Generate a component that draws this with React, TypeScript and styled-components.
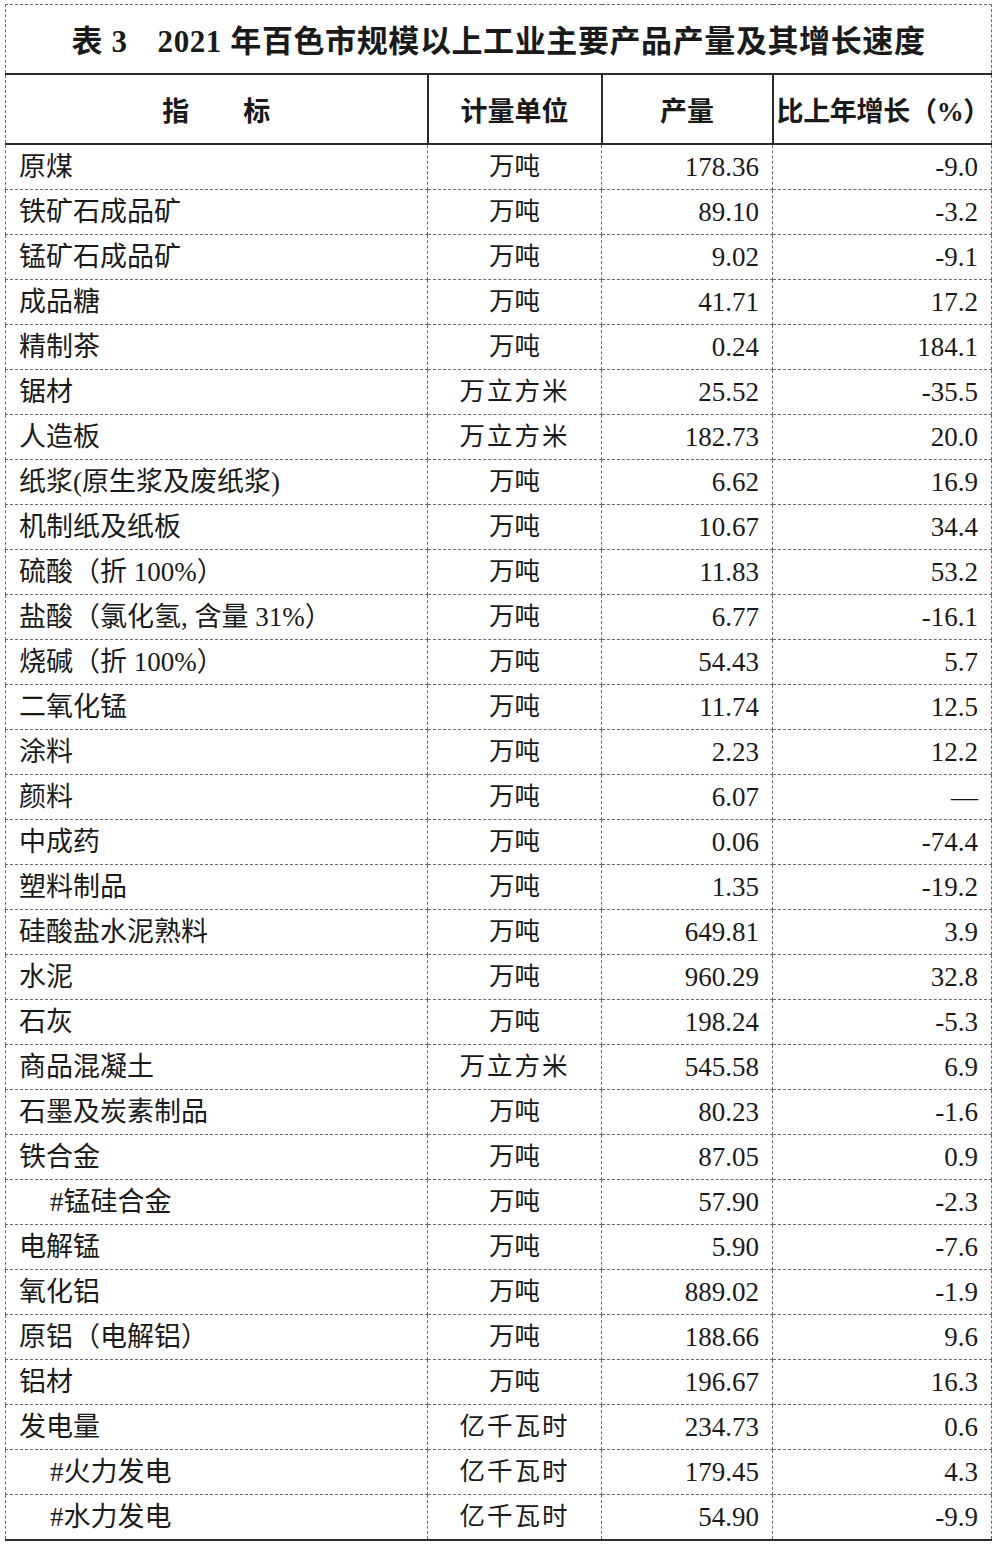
import React from 'react';
import styled, { createGlobalStyle } from 'styled-components';

const GlobalStyle = createGlobalStyle`
  html, body {
    margin: 0;
    padding: 0;
    background: #ffffff;
  }
  body {
    font-family: "Liberation Serif", "Noto Sans CJK SC", serif;
    color: #1a1a1a;
  }
`;

const Page = styled.div`
  width: 1000px;
  height: 1548px;
  padding: 4px 0 0 5px;
  box-sizing: border-box;
  background: #ffffff;
`;

const Table = styled.table`
  width: 986px;
  border-collapse: collapse;
  table-layout: fixed;
`;

const TitleCell = styled.th`
  height: 66px;
  padding: 0 0 2px;
  border-top: 1px dashed #6a6a6a;
  border-left: 1px dashed #6a6a6a;
  border-right: 1px dashed #6a6a6a;
  border-bottom: 2px solid #2b2b2b;
  font-size: 31px;
  font-weight: 700;
  text-align: center;
  letter-spacing: 0.6px;
  white-space: pre;
`;

const TitleGap = styled.span`
  display: inline-block;
  width: 30px;
`;

const HeadCell = styled.th`
  height: 68px;
  padding: 0;
  border: 2px solid #2b2b2b;
  font-size: 27px;
  font-weight: 700;
  text-align: center;
  white-space: pre;
  &:first-child {
    border-left: 1px dashed #6a6a6a;
  }
  &:last-child {
    border-right: 1px dashed #6a6a6a;
    padding-left: 2px;
    letter-spacing: -0.3px;
  }
`;

const Row = styled.tr`
  &:last-child td {
    border-bottom: 2px solid #2b2b2b;
  }
`;

const Cell = styled.td<{ $align: 'left' | 'center' | 'right'; $indent?: boolean; $wide?: boolean }>`
  height: 44px;
  padding: 0 ${(p) => (p.$align === 'right' ? '13px' : '0')} 0
    ${(p) => (p.$align === 'left' ? (p.$indent ? '44px' : '13px') : '0')};
  border: 1px dashed #6a6a6a;
  font-size: ${(p) => (p.$align === 'center' ? '25.5px' : '27px')};
  line-height: 1;
  text-align: ${(p) => p.$align};
  letter-spacing: ${(p) => (p.$wide ? '2px' : '0')};
  white-space: nowrap;
  vertical-align: middle;
`;

type Item = {
  name: string;
  unit: string;
  output: string;
  growth: string;
  sub?: boolean;
};

const items: Item[] = [
  { name: '原煤', unit: '万吨', output: '178.36', growth: '-9.0' },
  { name: '铁矿石成品矿', unit: '万吨', output: '89.10', growth: '-3.2' },
  { name: '锰矿石成品矿', unit: '万吨', output: '9.02', growth: '-9.1' },
  { name: '成品糖', unit: '万吨', output: '41.71', growth: '17.2' },
  { name: '精制茶', unit: '万吨', output: '0.24', growth: '184.1' },
  { name: '锯材', unit: '万立方米', output: '25.52', growth: '-35.5' },
  { name: '人造板', unit: '万立方米', output: '182.73', growth: '20.0' },
  { name: '纸浆(原生浆及废纸浆)', unit: '万吨', output: '6.62', growth: '16.9' },
  { name: '机制纸及纸板', unit: '万吨', output: '10.67', growth: '34.4' },
  { name: '硫酸（折 100%）', unit: '万吨', output: '11.83', growth: '53.2' },
  { name: '盐酸（氯化氢, 含量 31%）', unit: '万吨', output: '6.77', growth: '-16.1' },
  { name: '烧碱（折 100%）', unit: '万吨', output: '54.43', growth: '5.7' },
  { name: '二氧化锰', unit: '万吨', output: '11.74', growth: '12.5' },
  { name: '涂料', unit: '万吨', output: '2.23', growth: '12.2' },
  { name: '颜料', unit: '万吨', output: '6.07', growth: '—' },
  { name: '中成药', unit: '万吨', output: '0.06', growth: '-74.4' },
  { name: '塑料制品', unit: '万吨', output: '1.35', growth: '-19.2' },
  { name: '硅酸盐水泥熟料', unit: '万吨', output: '649.81', growth: '3.9' },
  { name: '水泥', unit: '万吨', output: '960.29', growth: '32.8' },
  { name: '石灰', unit: '万吨', output: '198.24', growth: '-5.3' },
  { name: '商品混凝土', unit: '万立方米', output: '545.58', growth: '6.9' },
  { name: '石墨及炭素制品', unit: '万吨', output: '80.23', growth: '-1.6' },
  { name: '铁合金', unit: '万吨', output: '87.05', growth: '0.9' },
  { name: '#锰硅合金', unit: '万吨', output: '57.90', growth: '-2.3', sub: true },
  { name: '电解锰', unit: '万吨', output: '5.90', growth: '-7.6' },
  { name: '氧化铝', unit: '万吨', output: '889.02', growth: '-1.9' },
  { name: '原铝（电解铝）', unit: '万吨', output: '188.66', growth: '9.6' },
  { name: '铝材', unit: '万吨', output: '196.67', growth: '16.3' },
  { name: '发电量', unit: '亿千瓦时', output: '234.73', growth: '0.6' },
  { name: '#火力发电', unit: '亿千瓦时', output: '179.45', growth: '4.3', sub: true },
  { name: '#水力发电', unit: '亿千瓦时', output: '54.90', growth: '-9.9', sub: true },
];

const App = () => {
  return (
    <Page>
      <GlobalStyle />
      <Table>
        <colgroup>
          <col style={{ width: 422 }} />
          <col style={{ width: 174 }} />
          <col style={{ width: 171 }} />
          <col style={{ width: 219 }} />
        </colgroup>
        <thead>
          <tr>
            <TitleCell colSpan={4}>
              表 3<TitleGap />2021 年百色市规模以上工业主要产品产量及其增长速度
            </TitleCell>
          </tr>
          <tr>
            <HeadCell>{'指        标'}</HeadCell>
            <HeadCell>计量单位</HeadCell>
            <HeadCell>产量</HeadCell>
            <HeadCell>比上年增长（%）</HeadCell>
          </tr>
        </thead>
        <tbody>
          {items.map((it) => (
            <Row key={it.name}>
              <Cell $align="left" $indent={it.sub}>
                {it.name}
              </Cell>
              <Cell $align="center" $wide={it.unit.length > 2}>
                {it.unit}
              </Cell>
              <Cell $align="right">{it.output}</Cell>
              <Cell $align="right">{it.growth}</Cell>
            </Row>
          ))}
        </tbody>
      </Table>
    </Page>
  );
};

export default App;
